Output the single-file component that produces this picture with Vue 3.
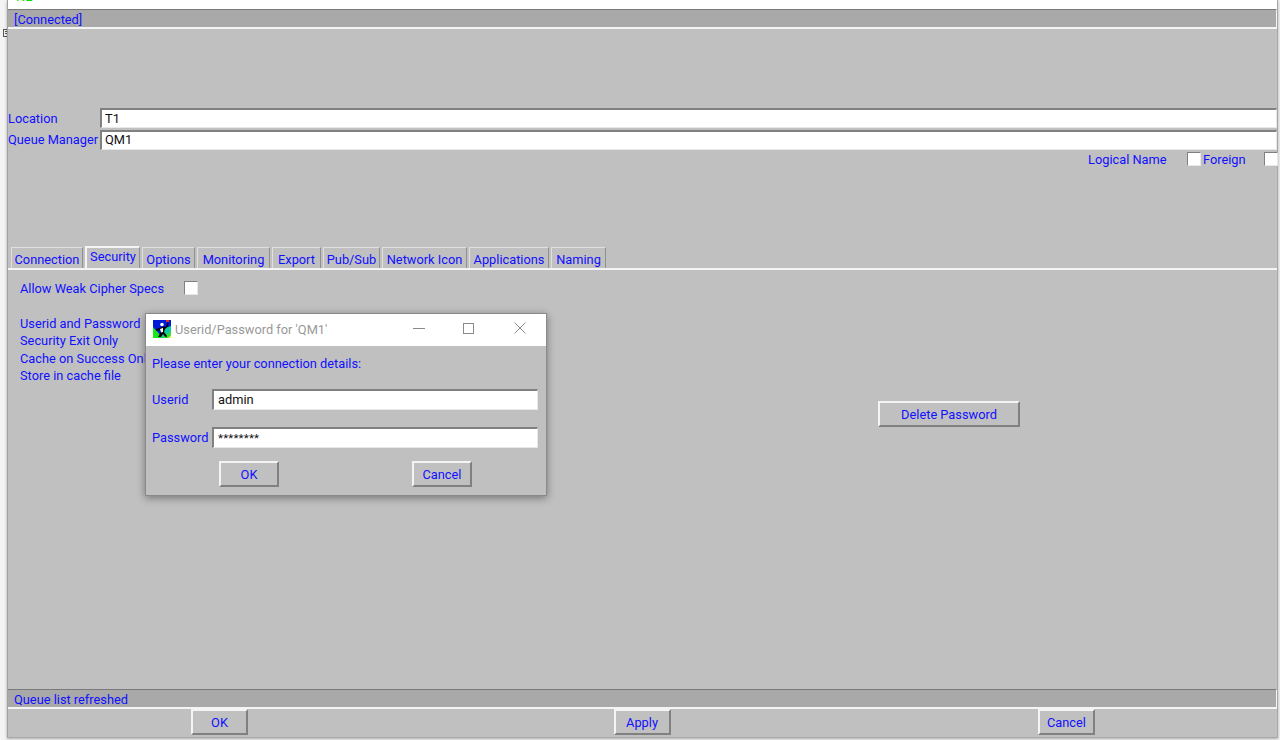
<script setup>
const tabs = [
  { label: 'Connection', width: 72 },
  { label: 'Security', width: 55 },
  { label: 'Options', width: 53 },
  { label: 'Monitoring', width: 73 },
  { label: 'Export', width: 49 },
  { label: 'Pub/Sub', width: 57 },
  { label: 'Network Icon', width: 85 },
  { label: 'Applications', width: 80 },
  { label: 'Naming', width: 55 }
]
const authRows = ['Userid and Password', 'Security Exit Only', 'Cache on Success Only', 'Store in cache file']
</script>

<template>
  <div class="page">
    <svg class="stray" width="7" height="8" viewBox="0 0 7 8">
      <rect x="0.5" y="0.5" width="6" height="7" fill="#f4f4f4" stroke="#555" />
      <path d="M2 2.5H7M2 4.5H7" stroke="#555" fill="none" />
    </svg>
    <div class="window">
      <div class="top-strip"><span class="green">NE</span></div>
      <div class="status"><span>[Connected]</span></div>
      <div class="form">
        <div class="form-row">
          <label class="form-label">Location</label>
          <div class="field"><span>T1</span></div>
        </div>
        <div class="form-row">
          <label class="form-label">Queue Manager</label>
          <div class="field"><span>QM1</span></div>
        </div>
        <div class="check-row">
          <span class="logical">Logical Name</span>
          <span class="check"></span>
          <span class="foreign">Foreign</span>
          <span class="check"></span>
        </div>
      </div>
      <div class="tabs">
        <div
          v-for="t in tabs"
          :key="t.label"
          class="tab"
          :class="{ active: t.label === 'Security' }"
          :style="{ width: t.width + 'px' }"
        >{{ t.label }}</div>
      </div>
      <div class="panel">
        <div class="left">
          <div class="weak"><span class="weak-label">Allow Weak Cipher Specs</span><span class="check"></span></div>
          <div class="auth">
            <div v-for="r in authRows" :key="r" class="auth-row">{{ r }}</div>
          </div>
        </div>
        <div class="right">
          <button class="btn delete">Delete Password</button>
        </div>
        <div class="dialog">
          <div class="titlebar">
            <svg class="app-icon" width="18" height="18" viewBox="0 0 18 18">
              <rect width="18" height="18" fill="#0018d8" />
              <path d="M0 7 L10 18 H0 Z" fill="#18e818" />
              <path d="M8 9 L18 6 V18 H8 Z" fill="#10c8a0" />
              <path d="M9 18 L18 11 V18 Z" fill="#30e030" />
              <path d="M15 18 L18 15 V18 Z" fill="#d8f030" />
              <rect x="13" y="0" width="3" height="2" fill="#e83010" />
              <path d="M15 2 L13 7 L10 6.5 L7 8 L3 9 L3 10.5 L7 10.5 L7.5 13 L5 17 L8 17 L10 14 L13 17.5 L14 16 L11 12 L12 9 L15.5 6 Z" fill="#000" />
              <circle cx="9" cy="4.5" r="1.8" fill="#fff" />
              <path d="M7 9 L10 8 L10 12 L8 12.5 Z" fill="#fff" />
            </svg>
            <span class="title">Userid/Password for 'QM1'</span>
            <svg class="ctl ctl-min" width="12" height="12" viewBox="0 0 12 12"><path d="M0 6.5H12" stroke="#8a8a8a" fill="none" /></svg>
            <svg class="ctl ctl-max" width="12" height="12" viewBox="0 0 12 12"><rect x="1.5" y="1.5" width="10" height="10" stroke="#8a8a8a" fill="none" /></svg>
            <svg class="ctl ctl-close" width="12" height="12" viewBox="0 0 12 12"><path d="M0.5 0.5L11.5 11.5M11.5 0.5L0.5 11.5" stroke="#8a8a8a" fill="none" /></svg>
          </div>
          <div class="dialog-body">
            <div class="prompt">Please enter your connection details:</div>
            <div class="dlg-row">
              <span class="dlg-label">Userid</span>
              <div class="field dlg-field"><span>admin</span></div>
            </div>
            <div class="dlg-row">
              <span class="dlg-label">Password</span>
              <div class="field dlg-field"><span class="stars">********</span></div>
            </div>
            <div class="dlg-buttons">
              <button class="btn dlg-btn">OK</button>
              <button class="btn dlg-btn">Cancel</button>
            </div>
          </div>
        </div>
      </div>
      <div class="status bottom-status"><span>Queue list refreshed</span></div>
      <div class="actions">
        <button class="btn action">OK</button>
        <button class="btn action apply">Apply</button>
        <button class="btn action">Cancel</button>
      </div>
    </div>
  </div>
</template>

<style>
html, body { margin: 0; padding: 0; background: #f4f4f4; overflow: hidden; }
</style>

<style scoped>
.page {
  position: relative;
  width: 1280px;
  height: 740px;
  overflow: hidden;
  font-family: Roboto, "Open Sans", sans-serif;
  font-size: 12.8px;
  color: #1010ff;
}
.stray {
  position: absolute;
  left: 3px;
  top: 29px;
}
.window {
  position: relative;
  margin-left: 7px;
  width: 1271px;
  height: 738px;
  background: #c0c0c0;
  display: flex;
  flex-direction: column;
  box-shadow: 0 1px 3px rgba(0, 0, 0, 0.3);
  border-left: 1px solid #a0a0a0;
  border-right: 1px solid #a8a8a8;
  border-bottom: 1px solid #a8a8a8;
  box-sizing: border-box;
}
.top-strip {
  height: 9px;
  background: #fff;
  overflow: hidden;
  padding-left: 8px;
  flex: none;
}
.green { color: #00e000; line-height: 1; display: block; margin-top: -9px; }
.status {
  flex: none;
  height: 20px;
  box-sizing: border-box;
  background: #a9a9a9;
  border-top: 1px solid #7a7a7a;
  border-bottom: 2px solid #f4f4f4;
  border-right: 1px solid #f4f4f4;
  padding-left: 6px;
  line-height: 19px;
}
.form { flex: none; height: 217px; padding-top: 79px; box-sizing: border-box; }
.form-row { display: flex; height: 20px; margin-bottom: 2px; }
.form-row + .form-row { margin-bottom: 0; }
.form-label { width: 92px; flex: none; line-height: 22px; white-space: nowrap; }
.form-row + .form-row .form-label { line-height: 20px; }
.field {
  flex: 1;
  box-sizing: border-box;
  background: #fff;
  border-top: 2px solid #808080;
  border-left: 2px solid #808080;
  border-right: 1px solid #e8e8e8;
  border-bottom: 1px solid #e8e8e8;
  color: #111;
  padding-left: 3px;
  line-height: 18px;
}
.form-row + .form-row .field { line-height: 16px; }
.check-row { display: flex; align-items: center; height: 18px; padding-left: 1080px; white-space: nowrap; }
.logical { width: 99px; flex: none; }
.foreign { width: 63px; flex: none; padding-left: 2px; box-sizing: border-box; }
.check {
  display: block;
  flex: none;
  width: 14px;
  height: 14px;
  box-sizing: border-box;
  background: #fff;
  border-top: 1px solid #808080;
  border-left: 1px solid #808080;
  border-right: 1px solid #e8e8e8;
  border-bottom: 1px solid #e8e8e8;
}
.tabs { flex: none; height: 22px; display: flex; align-items: flex-end; padding-left: 3px; gap: 2px; }
.tab {
  flex: none;
  height: 21px;
  box-sizing: border-box;
  border: 1px solid #e0e0e0;
  border-right-color: #909090;
  border-bottom: none;
  line-height: 24px;
  text-align: center;
  white-space: nowrap;
}
.tab.active {
  height: 22px;
  border-top: 2px solid #f4f4f4;
  border-left: 2px solid #f4f4f4;
  line-height: 18px;
}
.panel {
  position: relative;
  flex: 1;
  min-height: 0;
  border-top: 2px solid #f4f4f4;
  display: flex;
  box-sizing: border-box;
}
.left { width: 870px; flex: none; padding: 9px 0 0 12px; box-sizing: border-box; }
.weak { display: flex; align-items: center; height: 18px; }
.weak-label { width: 164px; flex: none; }
.auth { margin-top: 18px; }
.auth-row { height: 17.4px; line-height: 17px; white-space: nowrap; }
.right { padding-top: 131px; }
.btn {
  display: block;
  font: inherit;
  color: inherit;
  background: #c0c0c0;
  box-sizing: border-box;
  padding: 0;
  border-top: 2px solid #f4f4f4;
  border-left: 2px solid #f4f4f4;
  border-right: 2px solid #808080;
  border-bottom: 2px solid #808080;
}
.delete { width: 142px; height: 26px; }
.dialog {
  position: absolute;
  left: 137px;
  top: 43px;
  width: 402px;
  height: 183px;
  box-sizing: border-box;
  border: 1px solid #8a8a8a;
  background: #c0c0c0;
  box-shadow: 0 2px 8px rgba(0, 0, 0, 0.4);
}
.titlebar {
  height: 32px;
  box-sizing: border-box;
  padding: 0 0 2px 7px;
  background: #fff;
  display: flex;
  align-items: center;
  position: relative;
}
.title { color: #999; margin-left: 4px; white-space: nowrap; }
.ctl { position: absolute; top: 8px; }
.ctl-min { left: 267px; }
.ctl-max { left: 316px; }
.ctl-close { left: 368px; }
.dialog-body { padding: 9px 6px 0; }
.prompt { height: 18px; line-height: 18px; }
.dlg-row { display: flex; align-items: center; height: 21px; margin-top: 16px; }
.dlg-row + .dlg-row { margin-top: 17px; }
.dlg-label { width: 60px; flex: none; }
.dlg-field { flex: none; width: 326px; height: 21px; padding-left: 4px; line-height: 18px; }
.stars { font-size: 11.5px; letter-spacing: 0.2px; }
.dlg-buttons { display: flex; justify-content: space-between; padding: 13px 68px 0 67px; }
.dlg-btn { width: 60px; height: 26px; }
.actions { flex: none; height: 28px; display: flex; justify-content: space-between; padding: 0 182px 0 183px; align-items: flex-start; }
.action { width: 57px; height: 26px; }
.apply { margin-right: 2px; }
</style>
